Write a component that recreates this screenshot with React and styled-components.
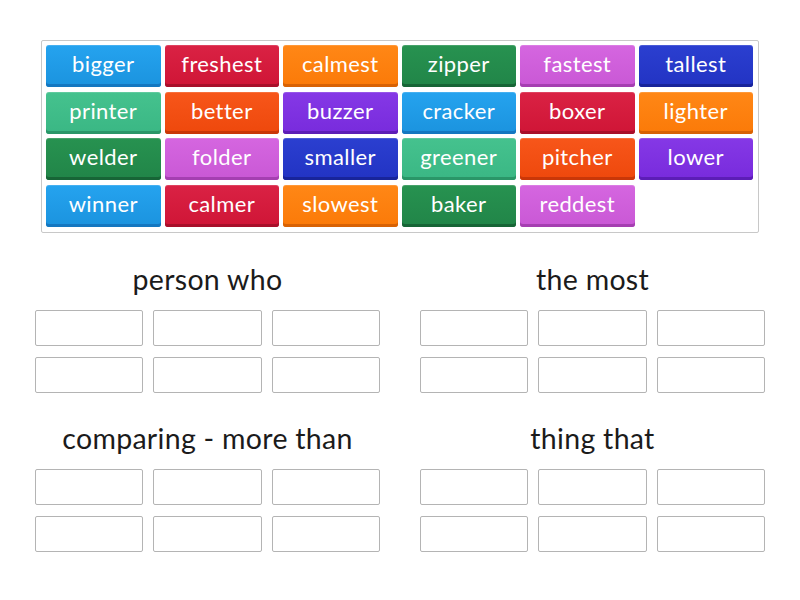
import React from "react";
import styled, { createGlobalStyle } from "styled-components";

const Global = createGlobalStyle`
  html, body { margin: 0; padding: 0; background: #fff; }
  body { font-family: Lato, "Open Sans", sans-serif; }
`;

const Page = styled.div`
  width: 800px;
  height: 600px;
  box-sizing: border-box;
  padding: 40px 41px 0 41px;
  display: flex;
  flex-direction: column;
`;

const Bank = styled.div`
  box-sizing: border-box;
  width: 718px;
  border: 1px solid #c8c8c8;
  border-radius: 2px;
  padding: 4px 5px 5px 4px;
  display: grid;
  grid-template-columns: repeat(6, 1fr);
  grid-auto-rows: 42px;
  column-gap: 4px;
  row-gap: 4.67px;
`;

const palette = {
  blue: ["#25a3ef", "#1b93de", "#1477c0"],
  red: ["#da2244", "#cf1536", "#a80f2a"],
  orange: ["#ff8716", "#fb7a08", "#d86204"],
  green: ["#279250", "#218548", "#176536"],
  pink: ["#d566e0", "#c958d5", "#a53fb1"],
  navy: ["#2b3fd0", "#2233c3", "#18249a"],
  teal: ["#45c28e", "#3ab784", "#2a9668"],
  redorange: ["#f7561a", "#ee480c", "#c93708"],
  purple: ["#8538e6", "#782bdc", "#5c1db6"],
};

const Tile = styled.div`
  border-radius: 3px;
  background: linear-gradient(
    ${(p) => palette[p.$c][0]},
    ${(p) => palette[p.$c][1]}
  );
  box-shadow: inset 0 -3px 0 ${(p) => palette[p.$c][2]},
    inset 0 1px 0 rgba(255, 255, 255, 0.15);
  color: #fff;
  font-size: 22px;
  display: flex;
  align-items: center;
  justify-content: center;
  padding-bottom: 5px;
  box-sizing: border-box;
  letter-spacing: 0.4px;
`;

const words = [
  ["bigger", "blue"],
  ["freshest", "red"],
  ["calmest", "orange"],
  ["zipper", "green"],
  ["fastest", "pink"],
  ["tallest", "navy"],
  ["printer", "teal"],
  ["better", "redorange"],
  ["buzzer", "purple"],
  ["cracker", "blue"],
  ["boxer", "red"],
  ["lighter", "orange"],
  ["welder", "green"],
  ["folder", "pink"],
  ["smaller", "navy"],
  ["greener", "teal"],
  ["pitcher", "redorange"],
  ["lower", "purple"],
  ["winner", "blue"],
  ["calmer", "red"],
  ["slowest", "orange"],
  ["baker", "green"],
  ["reddest", "pink"],
];

const Groups = styled.div`
  margin: 29px 0 0 -6px;
  width: 730px;
  display: grid;
  grid-template-columns: 345px 345px;
  column-gap: 40px;
  row-gap: 28px;
`;

const Group = styled.div`
  display: flex;
  flex-direction: column;
`;

const Title = styled.div`
  height: 36px;
  line-height: 34px;
  text-align: center;
  font-size: 28.5px;
  color: #1b1b1b;
  margin-bottom: 12px;
  letter-spacing: 0.3px;
`;

const Boxes = styled.div`
  display: grid;
  grid-template-columns: repeat(3, 1fr);
  grid-auto-rows: 36px;
  column-gap: 10px;
  row-gap: 11px;
`;

const Box = styled.div`
  border: 1px solid #b4b4b4;
  border-radius: 2px;
  background: #fff;
`;

const groups = ["person who", "the most", "comparing - more than", "thing that"];

export default function App() {
  return (
    <>
      <Global />
      <Page>
        <Bank>
          {words.map(([w, c]) => (
            <Tile key={w} $c={c}>
              {w}
            </Tile>
          ))}
        </Bank>
        <Groups>
          {groups.map((g) => (
            <Group key={g}>
              <Title>{g}</Title>
              <Boxes>
                {Array.from({ length: 6 }).map((_, i) => (
                  <Box key={i} />
                ))}
              </Boxes>
            </Group>
          ))}
        </Groups>
      </Page>
    </>
  );
}
